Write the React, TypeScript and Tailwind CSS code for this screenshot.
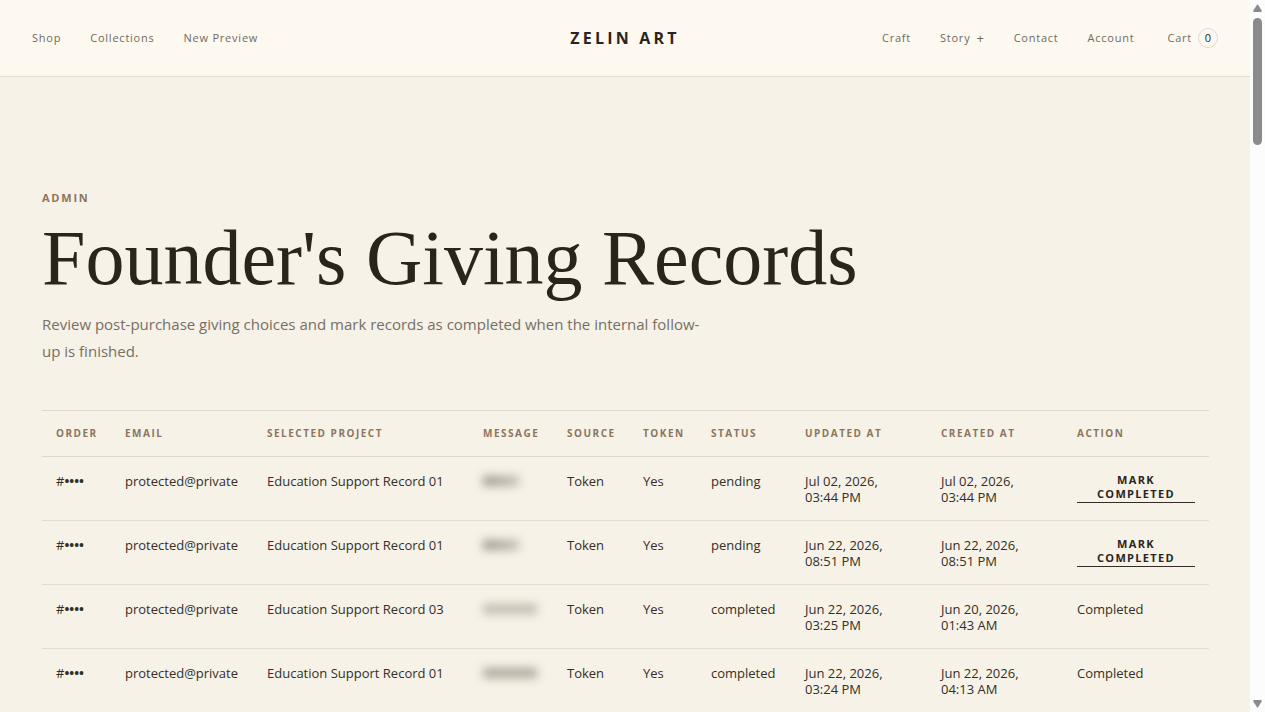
interface GivingRecord {
  project: string
  message: 'short' | 'long' | 'longDark'
  status: 'pending' | 'completed'
  updated: string
  created: string
}

const RECORDS: GivingRecord[] = [
  { project: 'Education Support Record 01', message: 'short', status: 'pending', updated: 'Jul 02, 2026, 03:44 PM', created: 'Jul 02, 2026, 03:44 PM' },
  { project: 'Education Support Record 01', message: 'short', status: 'pending', updated: 'Jun 22, 2026, 08:51 PM', created: 'Jun 22, 2026, 08:51 PM' },
  { project: 'Education Support Record 03', message: 'long', status: 'completed', updated: 'Jun 22, 2026, 03:25 PM', created: 'Jun 20, 2026, 01:43 AM' },
  { project: 'Education Support Record 01', message: 'longDark', status: 'completed', updated: 'Jun 22, 2026, 03:24 PM', created: 'Jun 22, 2026, 04:13 AM' },
]

const COLUMNS = [
  { label: 'Order', width: 'w-[69px]' },
  { label: 'Email', width: 'w-[142px]' },
  { label: 'Selected project', width: 'w-[216px]' },
  { label: 'Message', width: 'w-[84px]' },
  { label: 'Source', width: 'w-[76px]' },
  { label: 'Token', width: 'w-[68px]' },
  { label: 'Status', width: 'w-[94px]' },
  { label: 'Updated at', width: 'w-[136px]' },
  { label: 'Created at', width: 'w-[136px]' },
  { label: 'Action', width: 'w-[146px]' },
]

const MESSAGE_MASK = {
  short: 'w-9 bg-linear-to-r from-[#9a948c] to-[#c4beb5]',
  long: 'w-[54px] bg-[#c0bab1]',
  longDark: 'w-[54px] bg-[#aea8a0]',
}

function Header() {
  return (
    <header className="grid grid-cols-[1fr_auto_1fr] items-center h-[77px] px-8 bg-[#fdf9f1] border-b border-[#e4dfd6] text-[11px] tracking-[0.07em] text-[#6f6a61]">
      <nav className="flex gap-[29px]">
        <a href="#shop">Shop</a>
        <a href="#collections">Collections</a>
        <a href="#preview">New Preview</a>
      </nav>
      <a href="#home" className="text-base font-bold tracking-[0.2em] text-[#29251d]">ZELIN ART</a>
      <nav className="flex items-center justify-end gap-[29px]">
        <a href="#craft">Craft</a>
        <button className="flex items-center gap-[6px] tracking-[0.07em]">
          Story <span className="text-[13px] leading-4">+</span>
        </button>
        <a href="#contact">Contact</a>
        <a href="#account">Account</a>
        <a href="#cart" className="flex items-center gap-[6px] ml-1">
          Cart
          <span className="grid place-items-center size-5 rounded-full border border-[#e0dad0] text-[#29251d] tracking-normal">0</span>
        </a>
      </nav>
    </header>
  )
}

function RecordsTable() {
  return (
    <table className="mt-[45px] w-full table-fixed border-separate border-spacing-0 border-t border-[#ddd7cc] text-left text-[13px] leading-4 text-[#332f27]">
      <thead>
        <tr>
          {COLUMNS.map((c) => (
            <th key={c.label}
              className={`${c.width} h-[46px] border-b border-[#ddd7cc] px-[14px] pb-[2px] text-[10px] font-bold uppercase tracking-[0.15em] whitespace-nowrap text-[#8c7560]`}>
              {c.label}
            </th>
          ))}
        </tr>
      </thead>
      <tbody className="[&_td]:border-b [&_td]:border-[#e2dcd1] [&_td]:px-[14px] [&_td]:pt-4 [&_td]:pb-[15px] [&_td]:align-top">
        {RECORDS.map((r, i) => (
          <tr key={i}>
            <td className="whitespace-nowrap">#<span className="font-bold">••••</span></td>
            <td className="whitespace-nowrap">protected@private</td>
            <td className="whitespace-nowrap">{r.project}</td>
            <td><span className={`mt-[3px] block h-[10px] blur-[5px] ${MESSAGE_MASK[r.message]}`} /></td>
            <td>Token</td>
            <td>Yes</td>
            <td>{r.status}</td>
            <td>{r.updated}</td>
            <td>{r.created}</td>
            <td>
              {r.status === 'pending'
                ? <button className="block w-full border-b border-[#332f27] pb-px px-3 text-[11px] leading-[14px] font-bold uppercase tracking-[0.12em] text-[#29251d]">Mark completed</button>
                : 'Completed'}
            </td>
          </tr>
        ))}
      </tbody>
    </table>
  )
}

function Scrollbar() {
  return (
    <div aria-hidden="true" className="flex w-[15px] shrink-0 flex-col items-center bg-[#fcfcfc] py-1">
      <svg width="9" height="8" viewBox="0 0 9 8" fill="#8b8b8b"><path d="M4 .8 Q4.5 .2 5 .8 L8.7 6.6 Q9 7.8 8 8 H1 Q0 7.8 .3 6.6 Z" /></svg>
      <div className="mt-[6px] h-[127px] w-[9px] rounded-full bg-[#8b8b8b]" />
      <svg className="mt-auto" width="9" height="8" viewBox="0 0 9 8" fill="#8b8b8b"><path d="M4 7.2 Q4.5 7.8 5 7.2 L8.7 1.4 Q9 .2 8 0 H1 Q0 .2 .3 1.4 Z" /></svg>
    </div>
  )
}

export default function App() {
  return (
    <div className="flex h-screen overflow-hidden bg-[#f7f2e7] font-['Open_Sans','Noto_Sans',sans-serif]">
      <div className="min-w-0 flex-1 overflow-hidden">
        <Header />
        <main className="px-[42px] pt-[113px]">
          <p className="text-[11px] leading-4 font-bold tracking-[0.16em] text-[#8c7560]">ADMIN</p>
          <h1 className="mt-4 font-['Liberation_Serif',serif] text-[78px] leading-[72px] text-[#29251d]">Founder's Giving Records</h1>
          <p className="mt-[17px] max-w-[672px] text-[15px] leading-[27px] text-[#756f66]">
            Review post-purchase giving choices and mark records as completed when the internal follow-up is finished.
          </p>
          <RecordsTable />
        </main>
      </div>
      <Scrollbar />
    </div>
  )
}
